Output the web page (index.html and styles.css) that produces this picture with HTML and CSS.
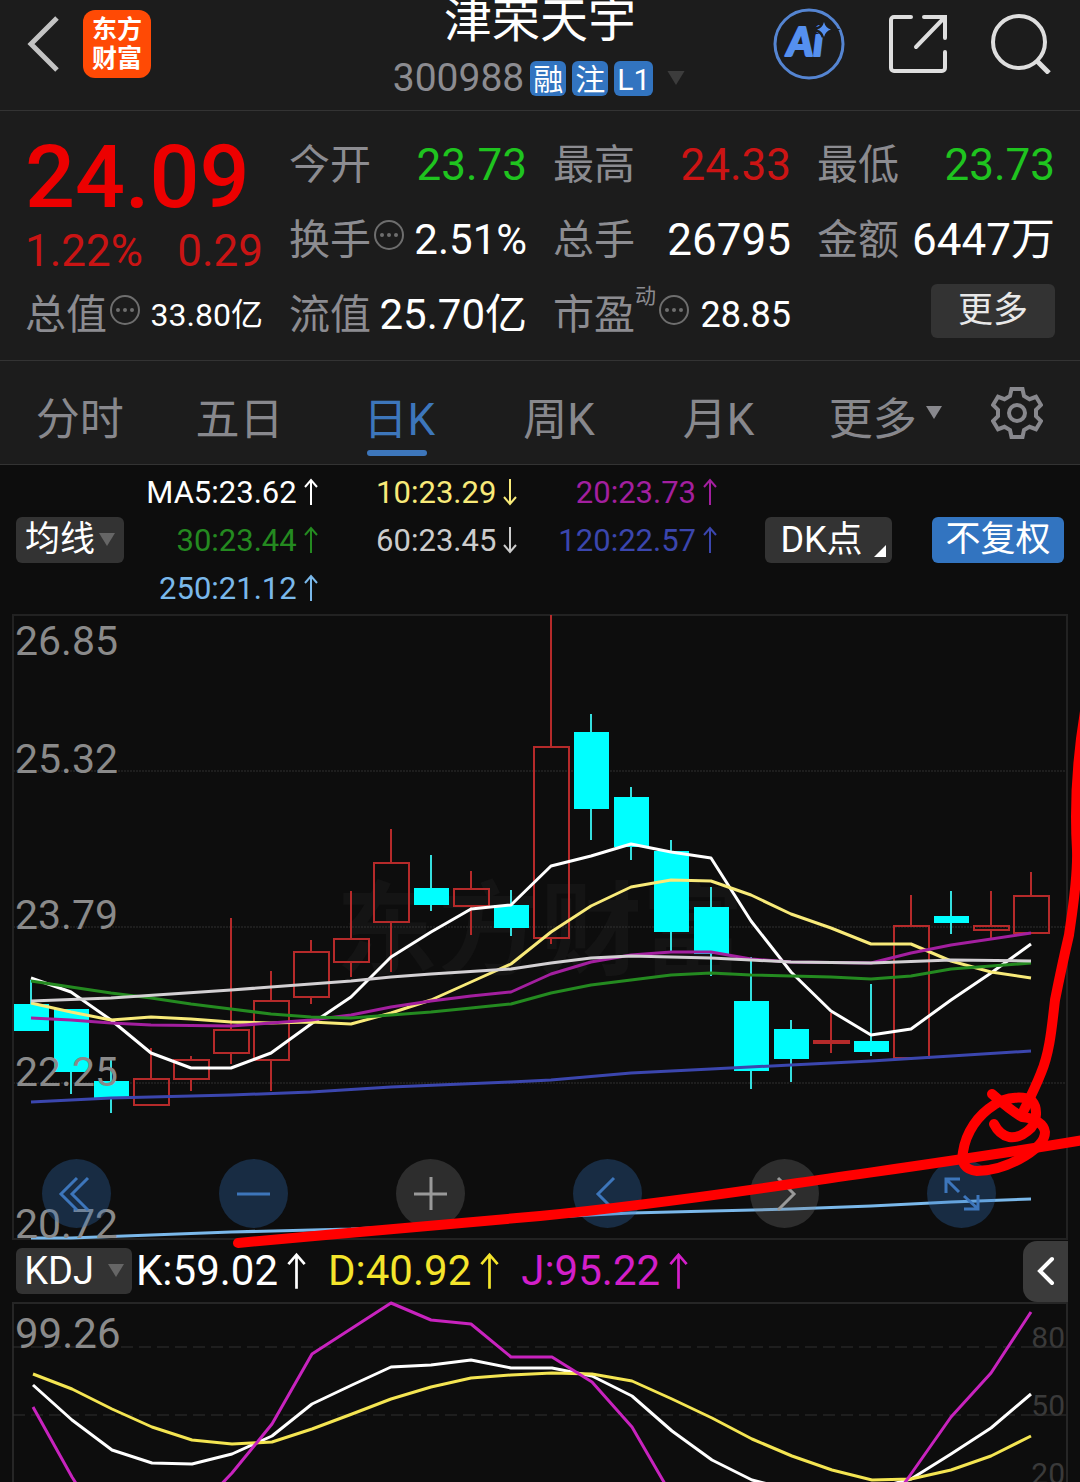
FILE: index.html
```html
<!DOCTYPE html>
<html lang="zh-CN">
<head>
<meta charset="utf-8">
<meta name="viewport" content="width=device-width, initial-scale=1">
<title>津荣天宇 300988</title>
<link rel="stylesheet" href="styles.css">
</head>
<body>
<svg class="defs" aria-hidden="true">
  <symbol id="up" viewBox="0 0 14 28"><path d="M7 27V2M1 9l6-7 6 7" fill="none" stroke="currentColor" stroke-width="2"/></symbol>
  <symbol id="down" viewBox="0 0 14 28"><path d="M7 1v25M1 19l6 7 6-7" fill="none" stroke="currentColor" stroke-width="2"/></symbol>
  <symbol id="info" viewBox="0 0 30 30"><circle cx="15" cy="15" r="14" fill="none" stroke="currentColor" stroke-width="2"/><g fill="currentColor"><circle cx="8" cy="15" r="2"/><circle cx="15" cy="15" r="2"/><circle cx="22" cy="15" r="2"/></g></symbol>
  <symbol id="caret" viewBox="0 0 16 14"><path d="M0 0h16L8 13z" fill="currentColor"/></symbol>
</svg>

<div class="page">
  <header class="topbar">
    <div class="topbar-left">
      <button class="icon-btn" aria-label="返回"><svg width="34" height="56" viewBox="0 0 34 56"><path d="M32 2L6 28l26 26" fill="none" stroke="#c3c3c3" stroke-width="5"/></svg></button>
      <a class="logo" href="#">东方<br>财富</a>
    </div>
    <div class="title-box">
      <h1 class="title">津荣天宇</h1>
      <div class="subtitle">
        <span class="code">300988</span>
        <span class="badge">融</span><span class="badge">注</span><span class="badge">L1</span>
        <svg class="code-caret" width="22" height="15"><use href="#caret"/></svg>
      </div>
    </div>
    <div class="topbar-right">
      <button class="icon-btn" aria-label="Ai">
        <svg width="72" height="72" viewBox="0 0 72 72">
          <circle cx="36" cy="36" r="34" fill="none" stroke="#5585d2" stroke-width="3"/>
          <text x="14" y="48" class="ai-text">Ai</text>
          <path d="M51 14q1.500 6 7 7.500-5.500 1.500-7 7.500-1.500-6-7-7.500 5.500-1.500 7-7.500z" fill="#5590f0" stroke="#1c1c1c" stroke-width="5" paint-order="stroke"/>
        </svg>
      </button>
      <button class="icon-btn" aria-label="分享">
        <svg width="60" height="60" viewBox="0 0 60 60"><path d="M23 3H6a3 3 0 0 0-3 3v48a3 3 0 0 0 3 3h48a3 3 0 0 0 3-3V38M36 3h21v21M56 4L28 33" fill="none" stroke="#dedede" stroke-width="4" stroke-linecap="round"/></svg>
      </button>
      <button class="icon-btn" aria-label="搜索">
        <svg width="60" height="60" viewBox="0 0 60 60"><circle cx="28" cy="28" r="26" fill="none" stroke="#dedede" stroke-width="4"/><path d="M45 46l13 13" stroke="#dedede" stroke-width="5"/></svg>
      </button>
    </div>
  </header>

  <section class="quote">
    <div class="price-cell">
      <div class="price">24.09</div>
      <div class="change"><span>1.22%</span><span>0.29</span></div>
    </div>
    <div class="cell"><span class="label">今开</span><span class="value green">23.73</span></div>
    <div class="cell"><span class="label">最高</span><span class="value red">24.33</span></div>
    <div class="cell"><span class="label">最低</span><span class="value green">23.73</span></div>
    <div class="cell"><span class="label">换手</span><svg class="info" width="30" height="30"><use href="#info"/></svg><span class="value v42">2.51%</span></div>
    <div class="cell"><span class="label">总手</span><span class="value">26795</span></div>
    <div class="cell"><span class="label">金额</span><span class="value">6447万</span></div>
    <div class="cell"><span class="label">总值</span><svg class="info" width="30" height="30"><use href="#info"/></svg><span class="value v32">33.80亿</span></div>
    <div class="cell"><span class="label">流值</span><span class="value v42">25.70亿</span></div>
    <div class="cell"><span class="label">市盈</span><span class="sup">动</span><svg class="info" width="30" height="30"><use href="#info"/></svg><span class="value v36">28.85</span></div>
    <div class="cell"><button class="more">更多</button></div>
  </section>

  <nav class="tabs">
    <a class="tab" href="#">分时</a>
    <a class="tab" href="#">五日</a>
    <a class="tab active" href="#">日K</a>
    <a class="tab" href="#">周K</a>
    <a class="tab" href="#">月K</a>
    <a class="tab" href="#">更多<svg class="tab-caret" width="16" height="14"><use href="#caret"/></svg></a>
    <button class="icon-btn gear" aria-label="设置">
      <svg width="52" height="54" viewBox="0 0 52 54"><path d="M20.500 3h11l1.500 7 5.500 3.200 6.500-2.400 5 8.200-5 4.800v6.400l5 4.800-5 8.200-6.500-2.400-5.500 3.200L31.500 51h-11L19 44l-5.500-3.200L7 43.200 2 35l5-4.800v-6.400L2 19l5-8.200 6.500 2.400L19 10z" fill="none" stroke="#88888d" stroke-width="4"/><circle cx="26" cy="27" r="8" fill="none" stroke="#88888d" stroke-width="4"/></svg>
    </button>
  </nav>

  <section class="legend">
    <button class="chip">均线<svg class="chip-caret" width="16" height="14"><use href="#caret"/></svg></button>
    <div class="ma-grid">
      <span class="ma ma5">MA5:23.62<svg class="arrow"><use href="#up"/></svg></span>
      <span class="ma ma10">10:23.29<svg class="arrow"><use href="#down"/></svg></span>
      <span class="ma ma20">20:23.73<svg class="arrow"><use href="#up"/></svg></span>
      <span class="ma ma30">30:23.44<svg class="arrow"><use href="#up"/></svg></span>
      <span class="ma ma60">60:23.45<svg class="arrow"><use href="#down"/></svg></span>
      <span class="ma ma120">120:22.57<svg class="arrow"><use href="#up"/></svg></span>
      <span class="ma ma250">250:21.12<svg class="arrow"><use href="#up"/></svg></span>
    </div>
    <button class="chip dk">DK点<svg class="corner" width="12" height="12" viewBox="0 0 12 12"><path d="M12 0v12H0z" fill="#fff"/></svg></button>
    <button class="chip blue">不复权</button>
  </section>

  <section class="chart">
    <svg class="plot" viewBox="12 614 1056 626" role="img" aria-label="日K线">
      <text class="watermark" x="336" y="967">东方财富</text>
      <path d="M13 771h1054M13 927h1054M13 1083h1054" stroke="#303030" stroke-dasharray="2 1"/>
      <rect x="13" y="615" width="1054" height="624" fill="none" stroke="#222" stroke-width="2"/>
      <g fill="#00ffff" stroke="none">
        <path d="M14 1004h35v27H14zM54 1009h35v63H54zM94 1081h35v17H94zM414 888h35v17h-35zM494 905h35v23h-35zM574 732h35v77h-35zM614 797h35v50h-35zM654 851h35v81h-35zM694 907h35v47h-35zM734 1001h35v70h-35zM774 1029h35v30h-35zM854 1041h35v11h-35zM934 916h35v7h-35z"/>
      </g>
      <path d="M31 980v24M71 1072v22M111 1060v21M111 1098v15M431 855v33M431 905v6M511 890v15M511 928v8M591 714v18M591 809v31M631 787v10M631 847v13M671 840v11M671 932v19M711 887v20M711 954v22M751 957v44M751 1071v18M791 1020v9M791 1059v23M871 984v57M871 1052v4M951 891v25M951 923v11" stroke="#35dede" stroke-width="2"/>
      <g fill="none" stroke="#b52a2a" stroke-width="2">
        <path d="M134 1079h35v26h-35zM174 1060h35v19h-35zM214 1030h35v23h-35zM254 1001h35v59h-35zM294 952h35v45h-35zM334 939h35v23h-35zM374 863h35v59h-35zM454 889h35v17h-35zM534 747h35v191h-35zM814 1041h35v2h-35zM894 926h35v132h-35zM974 926h35v4h-35zM1014 896h35v37h-35z"/>
        <path d="M151 1048v31M191 1056v4M191 1079v12M231 918v112M231 1053v11M271 971v30M271 1060v31M311 940v12M311 997v7M351 891v48M351 962v15M391 829v34M391 922v50M471 871v18M471 906v29M551 615v132M551 938v6M831 1013v40M911 895v31M991 891v35M991 930v8M1031 872v24"/>
      </g>
      <g class="lines">
        <polyline stroke="#7ab8ea" points="31,1238 71,1238 151,1235 231,1232 351,1229 431,1225 551,1217 631,1213 711,1211 791,1209 871,1206 951,1202 1031,1199"/>
        <polyline stroke="#3b46ae" points="31,1102 111,1098 231,1095 311,1092 391,1087 511,1082 551,1080 631,1073 711,1069 791,1065 871,1061 951,1056 1031,1051"/>
        <polyline stroke="#fff" points="31,978 71,992 111,1020 151,1053 191,1068 231,1068 271,1053 311,1024 351,997 391,957 431,932 471,909 511,905 551,866 591,856 631,844 671,852 711,858 751,921 791,972 831,1011 871,1035 911,1029 951,1000 991,973 1031,944"/>
        <polyline stroke="#f8ea79" points="31,1003 71,1012 111,1020 151,1017 191,1019 231,1022 271,1023 311,1022 351,1024 391,1013 431,1000 471,982 511,964 551,932 591,906 631,887 671,880 711,881 751,895 791,914 831,928 871,944 911,944 951,961 991,972 1031,978"/>
        <polyline stroke="#a31f9f" points="31,1018 71,1020 111,1023 151,1025 231,1026 271,1023 311,1020 351,1015 391,1007 431,1001 471,996 511,992 551,974 591,962 631,955 671,952 711,952 751,959 791,962 871,963 911,953 951,945 1031,933"/>
        <polyline stroke="#248a20" points="31,981 111,993 151,998 191,1004 231,1009 271,1014 311,1017 351,1018 391,1015 431,1012 471,1008 511,1004 551,993 591,985 631,980 671,975 711,973 751,975 791,976 831,977 871,979 911,976 951,969 1031,963"/>
        <polyline stroke="#d3d0d3" points="31,1001 111,998 231,990 351,981 391,977 431,974 511,969 551,963 591,958 631,956 671,957 711,958 751,960 791,962 871,963 951,960 1031,961"/>
      </g>
      <g class="axis">
        <text x="15" y="655">26.85</text>
        <text x="15" y="773">25.32</text>
        <text x="15" y="929">23.79</text>
        <text x="15" y="1086">22.25</text>
        <text x="15" y="1238">20.72</text>
      </g>
    </svg>
    <div class="controls">
      <button class="round" aria-label="最早"><svg viewBox="0 0 69 69"><path d="M35 19L19 35l16 16M46 19L30 35l16 16"/></svg></button>
      <button class="round" aria-label="缩小"><svg viewBox="0 0 69 69"><path d="M18 35h33"/></svg></button>
      <button class="round grey" aria-label="放大"><svg viewBox="0 0 69 69"><path d="M18 35h33M35 18v33"/></svg></button>
      <button class="round" aria-label="左移"><svg viewBox="0 0 69 69"><path d="M41 19L25 35l16 16"/></svg></button>
      <button class="round grey" aria-label="右移"><svg viewBox="0 0 69 69"><path d="M28 19l16 16-16 16"/></svg></button>
      <button class="round" aria-label="全屏"><svg viewBox="0 0 69 69"><path d="M19 34V20h14M20 21l12 12M51 36v14H37M50 49L37 37"/></svg></button>
    </div>
  </section>

  <section class="kdj-bar">
    <button class="chip kdj-chip">KDJ<svg class="chip-caret" width="16" height="14"><use href="#caret"/></svg></button>
    <span class="kdj k">K:59.02<svg class="arrow-lg"><use href="#up"/></svg></span>
    <span class="kdj d">D:40.92<svg class="arrow-lg"><use href="#up"/></svg></span>
    <span class="kdj j">J:95.22<svg class="arrow-lg"><use href="#up"/></svg></span>
    <button class="toggle" aria-label="展开"><svg width="20" height="32" viewBox="0 0 20 32"><path d="M16 4L4 16l12 12" fill="none" stroke="#fff" stroke-width="4" stroke-linecap="round"/></svg></button>
  </section>

  <section class="chart">
    <svg class="plot" viewBox="12 1302 1056 180" role="img" aria-label="KDJ">
      <path d="M13 1484V1303h1054v181" fill="none" stroke="#262626" stroke-width="2"/>
      <path d="M13 1347h1010M13 1415h1010" stroke="#303030" stroke-width="1" stroke-dasharray="12 6"/>
      <g class="axis-right">
        <text x="1065" y="1348">80</text>
        <text x="1065" y="1416">50</text>
        <text x="1065" y="1484">20</text>
      </g>
      <path d="M1023 1347h43M1023 1415h43" stroke="#303030"/>
      <text class="axis-top" x="15" y="1348">99.26</text>
      <g class="lines">
        <polyline stroke="#fff" points="33,1385 72,1420 112,1450 152,1463 192,1464 232,1454 272,1436 312,1404 352,1385 391,1367 431,1365 471,1360 511,1368 552,1368 592,1376 632,1396 672,1431 712,1460 752,1480 832,1500 911,1479 951,1454 991,1428 1031,1394"/>
        <polyline stroke="#f4e552" points="33,1374 72,1389 112,1409 152,1427 192,1440 232,1444 272,1442 312,1429 352,1414 391,1399 431,1387 471,1378 511,1375 552,1373 592,1374 632,1381 672,1399 712,1418 752,1439 792,1456 832,1470 872,1480 911,1479 951,1470 991,1456 1031,1436"/>
        <polyline stroke="#c823be" points="33,1407 72,1477 112,1540 192,1515 232,1473 272,1424 312,1354 391,1303 431,1320 471,1324 511,1357 552,1357 592,1382 632,1427 672,1496 871,1530 911,1474 951,1417 991,1373 1031,1312"/>
      </g>
    </svg>
  </section>

  <svg class="ink" viewBox="0 0 1080 1482" aria-hidden="true">
    <path d="M238 1243C340 1233 450 1225 540 1216S710 1196 798 1183 990 1156 1090 1139"/>
    <path d="M1087 700C1077 755 1074 800 1077 850 1078 880 1071 920 1069 935 1062 965 1058 985 1055 1000 1052 1025 1050 1052 1041 1073 1036 1086 1030 1098 1024 1110"/>
    <path d="M992 1094C1000 1101 1010 1110 1022 1117 1035 1118 1044 1124 1045 1132 1045 1140 1038 1148 1025 1156 1007 1167 990 1171 977 1171 965 1170 961 1163 963 1152 966 1132 978 1115 994 1105 1007 1096 1025 1096 1032 1101 1038 1108 1037 1120 1031 1128 1024 1135 1016 1138 1009 1137 1001 1135 997 1130 994 1124"/>
  </svg>
</div>
</body>
</html>
```
FILE: styles.css
```css
* { box-sizing: border-box; }

body {
  margin: 0;
  background: #0d0d0d;
  color: #fff;
  font-family: Roboto, "Noto Sans CJK SC", sans-serif;
}

button {
  margin: 0;
  padding: 0;
  border: 0;
  background: none;
  color: inherit;
  font: inherit;
}

a { color: inherit; text-decoration: none; }

svg { display: block; flex: none; }

.defs { position: absolute; width: 0; height: 0; }

.page { position: relative; overflow: hidden; }

/* Top bar */
.topbar {
  display: grid;
  grid-template-columns: 1fr auto 1fr;
  height: 111px;
  background: #1c1c1c;
  border-bottom: 1px solid #333;
}

.topbar-left,
.topbar-right {
  display: flex;
  align-items: center;
  height: 87px;
}

.topbar-left { gap: 24px; padding-left: 25px; }
.topbar-right { justify-content: flex-end; gap: 43px; padding-right: 29px; }

.logo {
  width: 68px;
  height: 68px;
  padding-top: 5px;
  border-radius: 12px;
  background: #ff4a05;
  font-size: 25px;
  font-weight: 700;
  line-height: 29px;
  text-align: center;
}

.title-box { display: flex; flex-direction: column; align-items: center; }

.title {
  margin: 0;
  height: 60px;
  font-size: 48px;
  font-weight: 400;
  line-height: 42px;
}

.subtitle { display: flex; align-items: center; gap: 6px; height: 36px; }

.code { color: #8c8c91; font-size: 39px; line-height: 36px; }

.badge {
  height: 35px;
  padding: 0 3px;
  border-radius: 6px;
  background: #3274c0;
  font-size: 30px;
  line-height: 37px;
}

.code-caret { margin-left: 6px; color: #3c3c3c; }

.ai-text {
  fill: #5590f0;
  stroke: #5590f0;
  stroke-width: 2px;
  stroke-linejoin: round;
  font-family: Lato, sans-serif;
  font-size: 40px;
  font-style: italic;
  font-weight: 900;
}

/* Quote panel */
.quote {
  display: grid;
  grid-template-columns: repeat(4, 1fr);
  grid-auto-rows: 75px;
  column-gap: 26px;
  padding: 16px 25px 8px;
  background: #1c1c1c;
  border-bottom: 1px solid #333;
}

.price-cell { grid-row: span 2; }

.price {
  height: 100px;
  color: #ec0000;
  font-size: 88px;
  font-weight: 500;
  line-height: 100px;
}

.change {
  display: flex;
  justify-content: space-between;
  color: #c91414;
  font-size: 44px;
  line-height: 48px;
}

.cell { display: flex; align-items: center; line-height: 60px; }

.label { color: #8c8c91; font-size: 41px; }

.value { margin-left: auto; font-size: 44px; }
.value.green { color: #1fc41f; }
.value.red { color: #cc1414; }
.value.v42 { font-size: 42px; }
.value.v36 { font-size: 36px; }
.value.v32 { font-size: 32px; }

.info { margin: 0 0 10px 3px; color: #6e6e6e; }

.sup { margin-bottom: 38px; color: #8c8c91; font-size: 21px; line-height: 24px; }

.more {
  width: 124px;
  height: 54px;
  margin: 0 0 8px auto;
  border-radius: 6px;
  background: #333;
  color: #e8e8e8;
  font-size: 35px;
  line-height: 54px;
}

/* Period tabs */
.tabs {
  display: grid;
  grid-template-columns: repeat(5, 160fr) 174fr 90fr;
  height: 104px;
  padding-right: 18px;
  background: #1c1c1c;
  border-bottom: 1px solid #333;
}

.tab {
  position: relative;
  display: flex;
  align-items: center;
  justify-content: center;
  gap: 9px;
  padding-top: 6px;
  color: #88888d;
  font-size: 44px;
}

.tab-caret { margin-bottom: 6px; }

.tab.active { color: #3d76bb; }

.tab.active::after {
  content: "";
  position: absolute;
  bottom: 8px;
  left: calc(50% - 32px);
  width: 60px;
  height: 6px;
  border-radius: 3px;
  background: #3d76bb;
}

.gear { display: flex; align-items: center; justify-content: center; }

/* Moving average legend */
.legend {
  display: flex;
  align-items: center;
  padding: 3px 16px 2px;
}

.chip {
  position: relative;
  display: flex;
  align-items: center;
  justify-content: center;
  gap: 4px;
  width: 108px;
  height: 46px;
  border-radius: 6px;
  background: #333;
  font-size: 35px;
  line-height: 46px;
}

.chip-caret { color: #666; }
.chip.dk { width: 127px; margin: 0 40px 0 48px; padding-right: 14px; font-size: 36px; }
.chip.blue { width: 132px; background: #3274c0; }
.corner { position: absolute; right: 6px; bottom: 6px; }

.ma-grid {
  flex: 1;
  display: grid;
  grid-template-columns: 194fr 200fr 200fr;
  grid-auto-rows: 48px;
}

.ma {
  display: flex;
  align-items: center;
  justify-content: flex-end;
  gap: 7px;
  font-size: 31px;
}

.arrow { width: 14px; height: 28px; }

.ma10 { color: #f8ea79; }
.ma20 { color: #a31f9f; }
.ma30 { color: #248a20; }
.ma60 { color: #ccc; }
.ma120 { color: #3b46ae; }
.ma250 { color: #7ab8ea; }

/* Charts */
.chart { position: relative; padding: 0 12px; }

.plot { width: 100%; height: auto; overflow: visible; }

.watermark { fill: #141414; font-size: 102px; font-weight: 700; }

.lines { fill: none; stroke-width: 3; stroke-linejoin: round; }

.axis { fill: #8a8a8a; font-size: 41px; }
.axis-top { fill: #8a8a8a; font-size: 42px; }
.axis-right { fill: #3a3a3a; font-size: 30px; text-anchor: end; }

.controls {
  position: absolute;
  right: 12px;
  bottom: 12px;
  left: 12px;
  display: flex;
  justify-content: space-between;
  padding: 0 72px 0 30px;
}

.round {
  width: 69px;
  height: 69px;
  border-radius: 50%;
  background: rgba(50, 116, 192, 0.3);
  color: #3d76bb;
}

.round.grey { background: rgba(130, 130, 130, 0.28); color: #999; }

.round path { fill: none; stroke: currentColor; stroke-width: 3; }

/* KDJ bar */
.kdj-bar {
  display: flex;
  align-items: center;
  height: 62px;
  padding: 0 12px 0 16px;
}

.kdj-chip { gap: 14px; width: 116px; font-size: 38px; }

.kdj {
  display: flex;
  align-items: center;
  gap: 9px;
  margin-right: 22px;
  font-size: 42px;
  line-height: 60px;
}

.kdj.k { margin-left: 4px; }
.kdj.d { color: #f4e52c; }
.kdj.j { color: #d31fc9; }

.arrow-lg { width: 19px; height: 38px; }

.toggle {
  display: flex;
  align-items: center;
  justify-content: center;
  width: 45px;
  height: 61px;
  margin-left: auto;
  border-radius: 14px 0 0 14px;
  background: #3b3b3b;
}

/* Hand-drawn marks */
.ink {
  position: absolute;
  top: 0;
  left: 0;
  width: 100%;
  pointer-events: none;
}

.ink path {
  fill: none;
  stroke: #f00;
  stroke-width: 10;
  stroke-linecap: round;
  stroke-linejoin: round;
}
```
